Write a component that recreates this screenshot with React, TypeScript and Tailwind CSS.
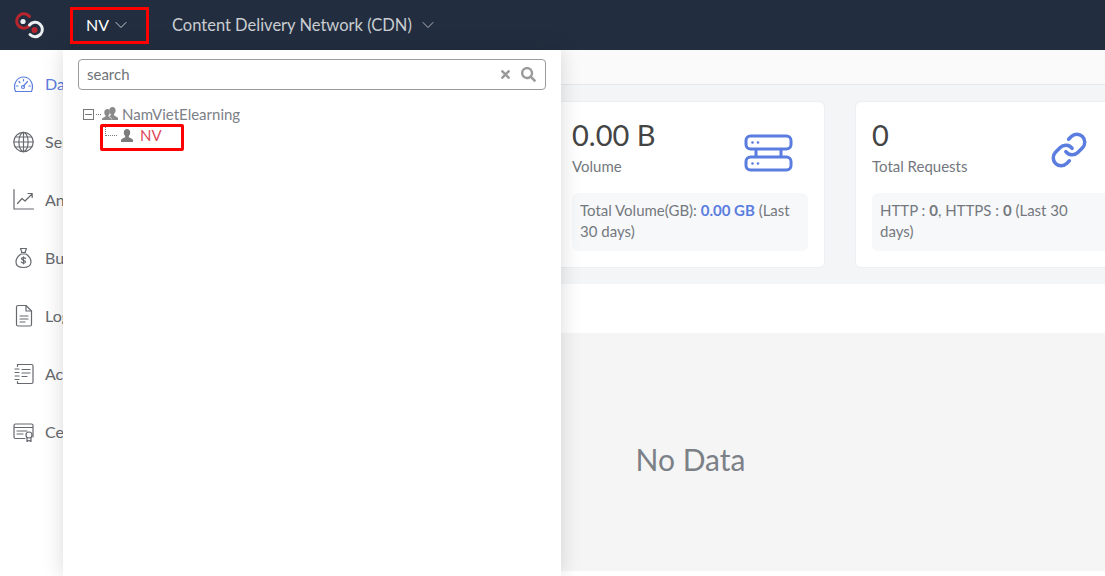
import { ChevronDown } from 'lucide-react';
import { FaSearch, FaTimes } from 'react-icons/fa';
import type { ReactNode } from 'react';

function Logo() {
  return (
    <svg width="34" height="30" viewBox="0 0 34 30" fill="none" className="shrink-0">
      <path d="M16.500 6.500 A7.200 7.200 0 1 0 16 16" stroke="#b8252f" strokeWidth="3" strokeLinecap="round" />
      <circle cx="10" cy="11.500" r="2.600" fill="#eceff1" />
      <path d="M16.500 15 A7.200 7.200 0 1 1 17 24.500" stroke="#eceff1" strokeWidth="3" strokeLinecap="round" />
      <circle cx="21.500" cy="20" r="3" fill="#b8252f" />
    </svg>
  );
}

const ic = { fill: 'none', stroke: 'currentColor', strokeWidth: 1.200, strokeLinecap: 'round' as const, strokeLinejoin: 'round' as const };

const sideItems: { label: string; active?: boolean; icon: ReactNode }[] = [
  {
    label: 'Dashboard',
    active: true,
    icon: (
      <g {...ic}>
        <path d="M3.500 19.500 C0.500 12 5 5 11.500 5 S22.500 12 19.500 19.500 Z" />
        <path d="M11.500 14 L15.500 9.500" />
        <circle cx="11" cy="15" r="1.500" />
        <path d="M4.500 14h1.500M17 14h1.500M7 9.500l1 1M11.500 7.500v1.500" />
      </g>
    ),
  },
  {
    label: 'Services',
    icon: (
      <g {...ic}>
        <circle cx="11.500" cy="12" r="9.700" />
        <ellipse cx="11.500" cy="12" rx="4.600" ry="9.700" />
        <path d="M11.500 2.300v19.400M1.800 12h19.400M3.200 7h16.600M3.200 17h16.600" />
      </g>
    ),
  },
  {
    label: 'Analytics',
    icon: (
      <g {...ic}>
        <path d="M2 1.500V21h19.500" />
        <path d="M5.500 15.500 L10 10.500 L13 13 L20 6 M16 5.500h4.200v4" />
      </g>
    ),
  },
  {
    label: 'Budget',
    icon: (
      <g {...ic}>
        <path d="M8.500 2.500h6l-1.500 4h-3zM9.500 6.500h4M9 8c-3 2-5 5-5 8 0 3.500 3 5.500 7.500 5.500S19 19.500 19 16c0-3-2-6-5-8z" />
        <path d="M13.500 12.500c-.5-1-3.500-1.300-4 .2-.4 2 4.300 1.200 4 3.300-.3 1.500-3.600 1.300-4.200 0M11.500 10.800v7" />
      </g>
    ),
  },
  {
    label: 'Logs',
    icon: (
      <g {...ic}>
        <path d="M6 1.500h8l5.500 5.500v13.500a1.500 1.500 0 0 1-1.500 1.500H6a1.500 1.500 0 0 1-1.500-1.500V3A1.500 1.500 0 0 1 6 1.500z" />
        <path d="M14 1.500V7h5.500M8 12h8M8 15h8M8 18h5" />
      </g>
    ),
  },
  {
    label: 'Activity',
    icon: (
      <g {...ic}>
        <path d="M5.500 2.500h14a1.500 1.500 0 0 1 1.500 1.500v16a1.500 1.500 0 0 1-1.500 1.500h-14" />
        <path d="M5.500 2.500v2M5.500 19.500v2M3 7h4M3 10.500h4M3 14h4M3 17.500h4M10 7.500h8M10 11h8M10 14.500h5" />
      </g>
    ),
  },
  {
    label: 'Certificates',
    icon: (
      <g {...ic}>
        <path d="M13 18.500H3.500A1.500 1.500 0 0 1 2 17V5.500A1.500 1.500 0 0 1 3.500 4h16A1.500 1.500 0 0 1 21 5.500V17" />
        <path d="M2.500 7.500h18M5 11h10M5 14h6" />
        <circle cx="17" cy="15" r="3" />
        <path d="M15 17.500v4l2-1 2 1v-4" />
      </g>
    ),
  },
];

function ServerIcon() {
  return (
    <svg width="50" height="38" viewBox="0 0 50 38" fill="none" stroke="#5a7ddf" strokeWidth="3" className="shrink-0">
      <rect x="2" y="2" width="45" height="13" rx="4.500" />
      <rect x="2" y="23" width="45" height="13" rx="4.500" />
      <path d="M12 15v8M37 15v8" />
      <circle cx="8.500" cy="8.500" r="1.300" fill="#5a7ddf" stroke="none" />
      <circle cx="14" cy="8.500" r="1.300" fill="#5a7ddf" stroke="none" />
      <circle cx="8.500" cy="29.500" r="1.300" fill="#5a7ddf" stroke="none" />
      <circle cx="14" cy="29.500" r="1.300" fill="#5a7ddf" stroke="none" />
    </svg>
  );
}

function LinkIcon() {
  return (
    <svg width="38" height="38" viewBox="0 0 24 24" fill="none" stroke="#5a7ddf" strokeWidth="2.200" strokeLinecap="round" strokeLinejoin="round" className="shrink-0">
      <path d="M10 13a5 5 0 0 0 7.540.540l3-3a5 5 0 0 0-7.070-7.070l-1.720 1.710" />
      <path d="M14 11a5 5 0 0 0-7.540-.540l-3 3a5 5 0 0 0 7.070 7.070l1.710-1.710" />
    </svg>
  );
}

function StatCard({ value, label, icon, children }: { value: string; label: string; icon: ReactNode; children: ReactNode }) {
  return (
    <div className="w-[270px] h-[167px] shrink-0 bg-white rounded-md border border-[#eceef1] px-4 pt-[14px]">
      <div className="flex justify-between items-start h-[77px]">
        <div>
          <div className="text-[29px] leading-[38px] text-[#444]">{value}</div>
          <div className="text-[15px] leading-5 mt-[2px] text-[#74787e]">{label}</div>
        </div>
        {icon}
      </div>
      <div className="bg-[#f7f8fa] rounded-md px-2 pt-[7px] pb-[9px] text-[15px] leading-[21px] text-[#74787e]">{children}</div>
    </div>
  );
}

export default function App() {
  return (
    <div className="relative h-[576px] w-[1105px] overflow-hidden bg-white font-['Lato','Noto_Sans',sans-serif]">
      {/* top bar */}
      <header className="h-[50px] bg-[#222e3f] flex items-center pl-[13px]">
        <Logo />
        <div className="ml-[23px] flex items-center gap-[2px] w-[79px] pl-[16px] text-white text-[16px]">
          NV <ChevronDown size={20} strokeWidth={1.100} className="text-[#d5d8dc]" />
        </div>
        <div className="ml-[23px] flex items-center gap-[6px] text-[#c9ccd1] text-[16.500px]">
          Content Delivery Network (CDN) <ChevronDown size={20} strokeWidth={1} />
        </div>
      </header>

      <div className="flex h-[526px]">
        <nav className="w-[226px] shrink-0 pt-[5px] bg-white">
          {sideItems.map((item) => (
            <div key={item.label} className={`h-[58px] flex items-center gap-[10px] pl-[12px] text-[16px] ${item.active ? 'text-[#5a7ddf]' : 'text-[#66696e]'}`}>
              <svg width="23" height="24" viewBox="0 0 23 24" className="shrink-0">{item.icon}</svg>
              {item.label}
            </div>
          ))}
        </nav>

        <main className="flex-1 min-w-0 flex flex-col overflow-hidden">
          <div className="h-[35px] shrink-0 bg-[#fafafa] border-b border-[#e5e7eb]" />
          <div className="h-[199px] shrink-0 bg-[#f4f5f7] flex gap-[30px] pl-[30px] pt-[16px]">
            <div className="w-[269px] h-[167px] shrink-0 bg-white rounded-md" />
            <StatCard value="0.00 B" label="Volume" icon={<div className="pt-[18px] pr-[14px]"><ServerIcon /></div>}>
              Total Volume(GB): <b className="text-[#5a7ddf]">0.00 GB</b> (Last 30 days)
            </StatCard>
            <StatCard value="0" label="Total Requests" icon={<div className="pt-[15px] pr-[20px]"><LinkIcon /></div>}>
              HTTP : <b>0</b>, HTTPS : <b>0</b> (Last 30 days)
            </StatCard>
          </div>
          <div className="h-[49px] shrink-0 bg-white" />
          <div className="h-[238px] shrink-0 bg-[#f5f5f5] flex justify-center pt-[106px] text-[30px] leading-[40px] text-[#7c8087]">
            <span className="ml-[50px]">No Data</span>
          </div>
        </main>
      </div>

      {/* org dropdown */}
      <div className="absolute left-[63px] top-[50px] bottom-0 w-[498px] bg-white shadow-[0_0_20px_rgba(0,0,0,0.15)] px-[15px] pt-[9px]">
        <div className="h-[31px] border border-[#9a9a9a] rounded-[4px] flex items-center pl-2 pr-[9px] text-[15px] leading-[26px] text-[#6f7378]">
          <span className="flex-1 mb-[2px]">search</span>
          <FaTimes size={13} className="text-[#9a9a9a] mr-[9px]" />
          <FaSearch size={15} className="text-[#9a9a9a]" />
        </div>
        <div className="mt-[14px] pl-[5px] text-[15px] text-[#7c8087]">
          <div className="flex items-center h-[20px]">
            <span className="w-[11px] h-[11px] border border-[#777] flex items-center justify-center">
              <span className="w-[7px] h-px bg-[#777]" />
            </span>
            <span className="w-[5px] ml-[2px] border-t border-dotted border-[#777]" />
            <svg width="16" height="14" viewBox="0 0 16 14" fill="#8a8a8a" className="ml-[1px]">
              <path d="M10.500 0C8.500 0 7.300 1.500 7.300 3.500c0 1.400.5 2.600 1.400 3.400v1.300L7 9.500c1.500.7 3 1.700 3.300 3.500H16v-1.800c0-1.300-3.300-2-4-3v-1.300c.9-.8 1.600-2 1.600-3.400C13.600 1.500 12.500 0 10.500 0z" />
              <path d="M5.500 2C3.500 2 2.300 3.500 2.300 5.500c0 1.200.5 2.300 1.200 3v1C2.500 10.300 0 10.800 0 12v1h10c0-1.200-2.500-2.700-3.500-3.500v-1c.8-.7 1.300-1.800 1.300-3C7.800 3.500 7.500 2 5.500 2z" />
            </svg>
            <span className="ml-[4px]">NamVietElearning</span>
          </div>
          <div className="flex items-center h-[22px] pl-[22px]">
            <span className="w-[12px] h-[10px] mb-[8px] border-l border-b border-dotted border-[#777]" />
            <svg width="12" height="13" viewBox="0 0 12 13" fill="#7c7c7c" className="ml-[4px]">
              <path d="M6 0C4 0 2.800 1.500 2.800 3.500c0 1.400.5 2.600 1.400 3.400v1.300C3 9 0 9.700 0 11v2h12v-2c0-1.300-3-2-4.200-2.800V6.900c.9-.8 1.400-2 1.400-3.400C9.200 1.500 8 0 6 0z" />
            </svg>
            <span className="ml-[7px] text-[#e04a5c]">NV</span>
          </div>
        </div>
      </div>

      {/* annotation boxes */}
      <div className="absolute left-[70px] top-[7px] w-[79px] h-[37px] border-[3px] border-[#ff0000]" />
      <div className="absolute left-[100px] top-[124px] w-[84px] h-[27px] border-[3px] border-[#ff0000] rounded-[2px]" />
    </div>
  );
}
